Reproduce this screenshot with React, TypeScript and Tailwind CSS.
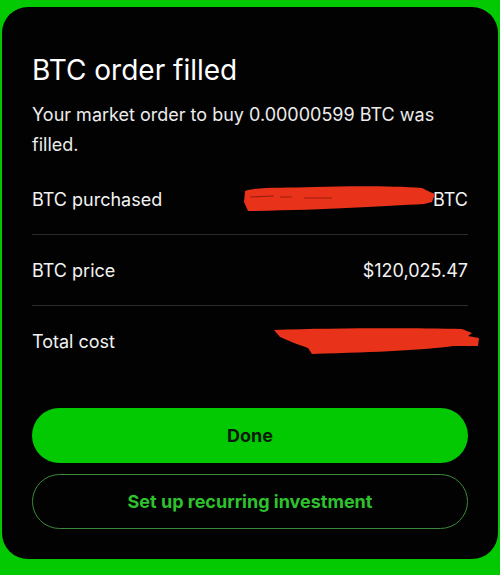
const rows = [
  { label: "BTC purchased", value: "BTC", redact: "btc" },
  { label: "BTC price", value: "$120,025.47", redact: null },
  { label: "Total cost", value: "", redact: "cost" },
];

function Scribble({ kind }: { kind: string }) {
  if (kind === "btc") {
    return (
      <svg width="192" height="26" viewBox="0 0 192 26" className="absolute right-[32px] top-1/2 -translate-y-1/2">
        <path
          d="M1 5 C10 1 40 2 70 1 C110 0 150 0 178 2 L186 6 L191 8 L188 16 L180 18 C140 20 80 24 4 25 L0 16 Z"
          fill="#e8321a"
        />
        <path d="M6 11 L30 10 M36 11 L48 11 M60 12 L88 12" stroke="#9c1e0e" strokeWidth="1.2" />
      </svg>
    );
  }
  return (
    <svg width="210" height="28" viewBox="0 0 210 28" className="absolute right-[-14px] top-1/2 -translate-y-1/2">
      <path
        d="M2 2 C60 0 140 0 190 1 L200 5 L196 8 L207 10 L206 18 L182 18 C150 22 110 24 40 26 L36 20 L22 15 L8 9 Z"
        fill="#e8321a"
      />
    </svg>
  );
}

export default function App() {
  return (
    <div className="flex h-[575px] w-[500px] flex-col bg-[#03c903] px-[2px] pt-[7px] pb-[16px] font-['Inter',sans-serif]">
      <div className="flex flex-1 flex-col rounded-[26px] bg-[#020202] px-[30px] pt-[45px]">
        <h1 className="text-[28px] leading-[36px] font-normal text-white">BTC order filled</h1>
        <p className="mt-[12px] text-[18px] leading-[30px] text-[#ececec]">
          Your market order to buy 0.00000599 BTC was filled.
        </p>
        <div className="mt-[4px] flex flex-col">
          {rows.map((r, i) => (
            <div
              key={r.label}
              className={`relative flex h-[71px] items-center justify-between text-[18px] text-[#f2f2f2] ${i < rows.length - 1 ? "border-b border-[#2a2a2a]" : ""}`}
            >
              <span>{r.label}</span>
              <span>{r.value}</span>
              {r.redact && <Scribble kind={r.redact} />}
            </div>
          ))}
        </div>
        <div className="mt-[31px] flex flex-col gap-[11px]">
          <button className="h-[55px] w-full rounded-full bg-[#03c903] text-[18px] font-bold text-[#0a1a0a]">
            Done
          </button>
          <button className="h-[55px] w-full rounded-full border border-[#3a8a3a] text-[18px] font-bold text-[#2ec22e]">
            Set up recurring investment
          </button>
        </div>
      </div>
    </div>
  );
}
